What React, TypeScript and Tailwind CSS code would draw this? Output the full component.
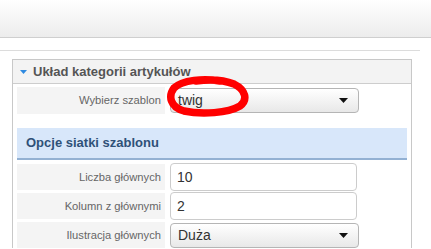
import React from 'react';

/**
 * Template settings panel - "Układ kategorii artykułów"
 */
function Caret() {
  return (
    <svg width="9" height="5" viewBox="0 0 9 5" className="shrink-0">
      <path d="M0 0 L9 0 L4.5 5 Z" fill="#111" />
    </svg>
  );
}

function FormRow({ label, children }: { label: string; children: React.ReactNode }) {
  return (
    <div className="flex items-stretch h-[26px] mb-[3px]">
      <div className="w-[148px] bg-[#f4f4f4] flex items-center justify-end pr-[4px] text-[11.2px] text-[#666]">
        {label}
      </div>
      <div className="ml-[5px] flex items-center">{children}</div>
    </div>
  );
}

function TextInput({ value }: { value: string }) {
  return (
    <div className="w-[187px] h-[28px] border border-[#ccc] rounded-[4px] bg-white flex items-center px-[6px] text-[14px] text-[#333]">
      {value}
    </div>
  );
}

function Select({ value }: { value: string }) {
  return (
    <div className="w-[189px] h-[25px] border border-[#b5b5b5] rounded-[4px] bg-gradient-to-b from-white to-[#e8e8e8] flex items-center justify-between pl-[7px] pr-[10px] text-[14px] text-[#333]">
      <span>{value}</span>
      <Caret />
    </div>
  );
}

export default function App() {
  return (
    <div className="w-[431px] h-[249px] overflow-hidden bg-white font-['Liberation_Sans',Arial,sans-serif]">
      {/* Top bar */}
      <div className="h-[38px] bg-gradient-to-b from-white to-[#ececec] border-b border-[#cfcfcf]" />

      {/* Divider */}
      <div className="mt-[12px] w-[420px] border-t border-[#dcdcdc]" />

      {/* Panel */}
      <div className="ml-[12px] mt-[8px] w-[400px] border border-[#c8c8c8] border-b-0">
        <div className="h-[24px] bg-[#f3f3f3] border-b border-[#cdcdcd] flex items-center pl-[7px] gap-[6px]">
          <svg width="7" height="4" viewBox="0 0 7 4">
            <path d="M0 0 L7 0 L3.5 4 Z" fill="#2f8ae0" />
          </svg>
          <span className="text-[13px] font-bold text-[#555]">Układ kategorii artykułów</span>
        </div>

        <div className="px-[4px] pt-[3px]">
          <div className="relative">
            <div className="flex items-stretch h-[27px]">
              <div className="w-[148px] bg-[#f4f4f4] flex items-center justify-end pr-[4px] text-[11.2px] text-[#666]">
                Wybierz szablon
              </div>
              <div className="ml-[5px] flex items-center">
                <Select value="twig" />
              </div>
            </div>
            {/* Red hand-drawn mark */}
            <svg
              className="absolute left-[147px] top-[-12px] pointer-events-none"
              width="90"
              height="45"
              viewBox="0 0 90 45"
            >
              <path
                d="M56 6 C40 3 18 5 10 13 C4 21 6 32 20 36 C38 40 64 38 76 31 C84 25 82 15 70 9 C60 5 46 4 32 6"
                fill="none"
                stroke="#ff0000"
                strokeWidth="7.5"
                strokeLinecap="round"
              />
            </svg>
          </div>

          <div className="mt-[14px] h-[32px] bg-[#d8e7fa] border-b-2 border-[#93b1d3] flex items-center pl-[9px] text-[13px] font-bold text-[#2f5178]">
            Opcje siatki szablonu
          </div>

          <div className="pt-[4px]">
            <FormRow label="Liczba głównych">
              <TextInput value="10" />
            </FormRow>
            <FormRow label="Kolumn z głównymi">
              <TextInput value="2" />
            </FormRow>
            <FormRow label="Ilustracja głównych">
              <Select value="Duża" />
            </FormRow>
          </div>
        </div>
      </div>
    </div>
  );
}
